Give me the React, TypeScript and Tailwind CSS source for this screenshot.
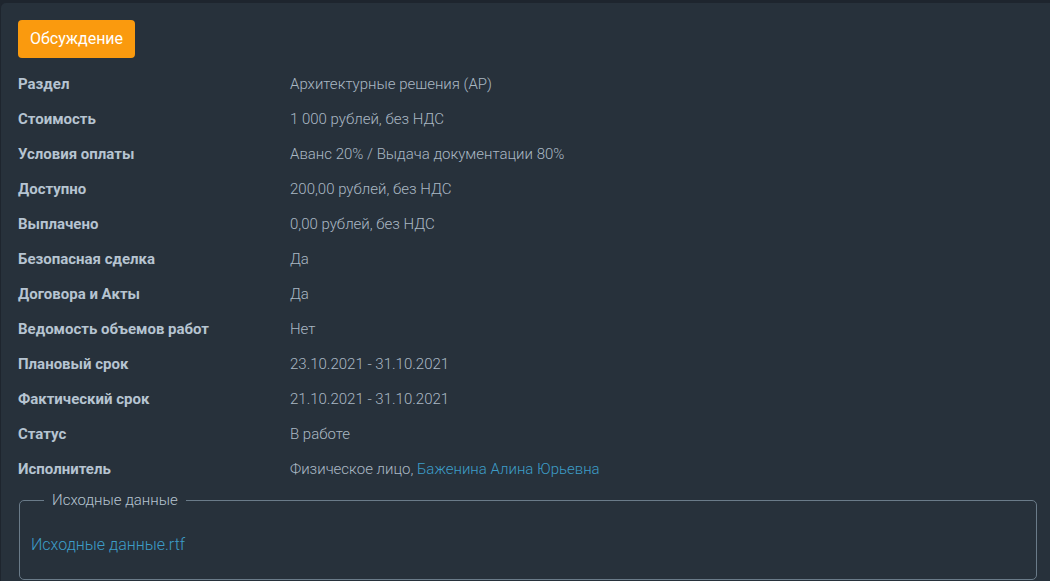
import React from "react";

const rows: [string, React.ReactNode][] = [
  ["Раздел", "Архитектурные решения (АР)"],
  ["Стоимость", "1 000 рублей, без НДС"],
  ["Условия оплаты", "Аванс 20% / Выдача документации 80%"],
  ["Доступно", "200,00 рублей, без НДС"],
  ["Выплачено", "0,00 рублей, без НДС"],
  ["Безопасная сделка", "Да"],
  ["Договора и Акты", "Да"],
  ["Ведомость объемов работ", "Нет"],
  ["Плановый срок", "23.10.2021 - 31.10.2021"],
  ["Фактический срок", "21.10.2021 - 31.10.2021"],
  ["Статус", "В работе"],
  [
    "Исполнитель",
    <>
      Физическое лицо, <a className="text-[#3d9dc8]">Баженина Алина Юрьевна</a>
    </>,
  ],
];

export default function App() {
  return (
    <div
      className="w-[1050px] h-[581px] overflow-hidden bg-[#1e252e] pt-[3px] pl-[1px]"
      style={{ fontFamily: "Roboto, 'Noto Sans', sans-serif" }}
    >
      <div className="h-[600px] bg-[#27313b] rounded-tl-[5px] pt-[17px] pl-[17px] pr-[13px]">
        <button className="h-[38px] w-[117px] rounded-[4px] bg-[#fa9a0e] text-white text-[16px] leading-none">
          Обсуждение
        </button>
        <div className="mt-[9px] flex flex-col">
          {rows.map(([k, v]) => (
            <div key={k} className="flex h-[35px] items-center text-[15px]">
              <div className="w-[272px] font-bold text-[#b6c4d1]">{k}</div>
              <div className="font-light text-[#aab8c4]">{v}</div>
            </div>
          ))}
        </div>
        <fieldset className="mt-[4px] ml-[1px] border border-[#6a7b89] rounded-[5px] px-[11px] pt-[18px] pb-[17px]">
          <legend className="ml-[13px] px-[8px] text-[15px] font-light leading-[18px] text-[#b6c4d1]">
            Исходные данные
          </legend>
          <div className="h-[35px] flex items-center text-[16px] font-light">
            <a className="text-[#3d9dc8]">Исходные данные.rtf</a>
          </div>
        </fieldset>
      </div>
    </div>
  );
}
